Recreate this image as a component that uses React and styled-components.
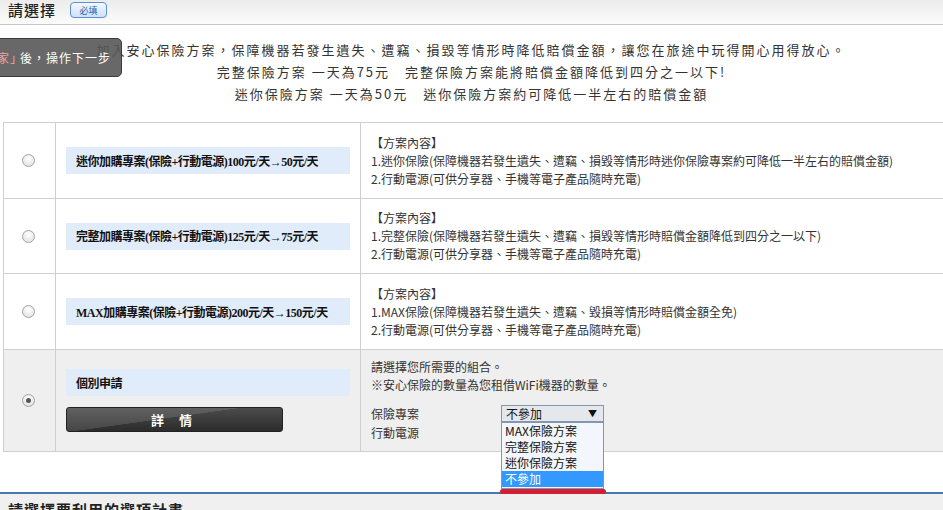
import React from 'react';
import styled, { createGlobalStyle } from 'styled-components';

const GlobalStyle = createGlobalStyle`
    html, body {
        margin: 0;
        padding: 0;
        overflow: hidden;
        background: #fff;
    }
    body {
        font-family: "Noto Sans CJK TC", "Noto Sans", sans-serif;
        color: #333;
    }
`

const Page = styled.div`
    position: relative;
    width: 943px;
    height: 510px;
    overflow: hidden;
`

const Header = styled.div`
    height: 25px;
    box-sizing: border-box;
    border-bottom: 1px solid #c6c6c6;
    background: linear-gradient(#ececec, #fbfbfb);
    display: flex;
    align-items: flex-start;
    padding: 0 0 0 8px;
    gap: 14px;
`

const Title = styled.h2`
    margin: 0;
    font-size: 15px;
    line-height: 19px;
    font-weight: 500;
    letter-spacing: 1px;
    color: #222;
`

const Badge = styled.span`
    display: inline-flex;
    align-items: center;
    justify-content: center;
    width: 37px;
    height: 16px;
    margin-top: 2px;
    box-sizing: border-box;
    border: 1px solid #5b8fd6;
    border-radius: 4px;
    background: linear-gradient(#f4f8ff, #cfe0f8);
    font-size: 9px;
    color: #2a5fb0;
`

const Intro = styled.div`
    text-align: center;
    font-size: 13px;
    letter-spacing: 2px;
    line-height: 22px;
    padding-top: 14px;
    color: #333;
`

const Hint = styled.div`
    position: absolute;
    left: -1px;
    top: 38px;
    width: 123px;
    height: 39px;
    box-sizing: border-box;
    border: 1px solid #3c3c3c;
    border-radius: 0 5px 5px 0;
    background: rgba(88, 88, 88, 0.9);
    color: #fff;
    font-size: 12px;
    letter-spacing: 1px;
    display: flex;
    align-items: center;
    white-space: nowrap;
    overflow: hidden;
    text-indent: -3px;
    span {
        color: #f1a2a6;
    }
`

const Table = styled.div`
    margin: 17px 0 0 3px;
    width: 960px;
    border-bottom: 1px solid #cfcfcf;
`

const Row = styled.div`
    display: grid;
    grid-template-columns: 52px 305px 1fr;
    box-sizing: border-box;
    min-height: ${p => p.h}px;
    border-top: 1px solid #cfcfcf;
    background: ${p => (p.gray ? '#efefef' : '#fff')};
`

const Cell = styled.div`
    border-left: 1px solid #cfcfcf;
    display: flex;
    flex-direction: column;
    justify-content: center;
`

const RadioCell = styled(Cell)`
    align-items: center;
`

const Radio = styled.span`
    width: 13px;
    height: 13px;
    box-sizing: border-box;
    border-radius: 50%;
    border: 1px solid #a3a3a3;
    background: radial-gradient(circle at 50% 35%, #ffffff, #dcdcdc);
    display: flex;
    align-items: center;
    justify-content: center;
    margin-left: -3px;
    &::after {
        content: '';
        width: 5px;
        height: 5px;
        border-radius: 50%;
        background: ${p => (p.checked ? '#555' : 'transparent')};
    }
`

const PlanCell = styled(Cell)`
    padding: 0 10px;
    gap: 11px;
`

const PlanName = styled.div`
    height: 27px;
    background: #e1ecfb;
    display: flex;
    align-items: center;
    padding-left: 10px;
    font-family: "Liberation Serif", "Noto Sans CJK TC", serif;
    font-size: 12px;
    font-weight: bold;
    letter-spacing: -0.5px;
    color: #111;
`

const DetailButton = styled.button`
    width: 217px;
    height: 25px;
    border: 1px solid #222;
    border-radius: 3px;
    background:
        linear-gradient(172deg, rgba(255,255,255,0.12) 0 45%, transparent 46%),
        linear-gradient(#4b4b4b, #2c2c2c);
    color: #fff;
    font-family: "Noto Sans CJK TC", sans-serif;
    font-size: 13px;
    font-weight: bold;
    letter-spacing: 6px;
    padding: 0;
    cursor: pointer;
`

const InfoCell = styled(Cell)`
    padding: ${p => (p.top ? '8px 10px 9px' : '0 10px')};
    justify-content: ${p => (p.top ? 'flex-start' : 'center')};
    font-size: 12px;
    line-height: 18px;
    color: #333;
`

const Line = styled.div`
    white-space: nowrap;
`

const FormRows = styled.div`
    margin-top: 10px;
    display: grid;
    grid-template-columns: 130px 103px;
    grid-auto-rows: 19px;
    align-items: center;
    font-size: 12px;
`

const SelectWrap = styled.div`
    position: relative;
    height: 17px;
`

const SelectBox = styled.div`
    height: 17px;
    box-sizing: border-box;
    border: 1px solid #8595ad;
    background: #e4e7ec;
    display: flex;
    align-items: center;
    justify-content: space-between;
    padding: 0 6px 0 4px;
    font-size: 12px;
    color: #111;
    i {
        font-style: normal;
        font-size: 9px;
    }
`

const OptionList = styled.ul`
    position: absolute;
    top: 17px;
    left: 0;
    width: 103px;
    margin: 0;
    padding: 0 0 1px;
    list-style: none;
    box-sizing: border-box;
    border: 1px solid #8397b3;
    background: #f3f6fb;
    z-index: 5;
    &::after {
        content: '';
        position: absolute;
        left: -2px;
        right: -3px;
        bottom: -6px;
        height: 5px;
        border-radius: 3px;
        background: #d21f33;
    }
`

const Option = styled.li`
    height: 16px;
    line-height: 16px;
    padding-left: 3px;
    font-size: 12px;
    white-space: nowrap;
    color: ${p => (p.selected ? '#fff' : '#111')};
    background: ${p => (p.selected ? '#3399ff' : 'transparent')};
`

const BottomBar = styled.div`
    margin-top: 40px;
    border-top: 2px solid #4878b0;
    background: #f0f0f0;
    height: 40px;
    padding: 5px 8px;
    font-size: 15px;
    font-weight: bold;
    letter-spacing: 1px;
    color: #222;
`

const plans = [
    {
        h: 76,
        name: '迷你加購專案(保險+行動電源)100元/天→50元/天',
        info: ['1.迷你保險(保障機器若發生遺失、遭竊、損毀等情形時迷你保險專案約可降低一半左右的賠償金額)'],
    },
    {
        h: 75,
        name: '完整加購專案(保險+行動電源)125元/天→75元/天',
        info: ['1.完整保險(保障機器若發生遺失、遭竊、損毀等情形時賠償金額降低到四分之一以下)'],
    },
    {
        h: 76,
        name: 'MAX加購專案(保險+行動電源)200元/天→150元/天',
        info: ['1.MAX保險(保障機器若發生遺失、遭竊、毀損等情形時賠償金額全免)'],
    },
]

const App = () => {
    return (
        <Page>
            <GlobalStyle />
            <Header>
                <Title>請選擇</Title>
                <Badge>必填</Badge>
            </Header>
            <Intro>
                <div>加入安心保險方案，保障機器若發生遺失、遭竊、損毀等情形時降低賠償金額，讓您在旅途中玩得開心用得放心。</div>
                <div>完整保險方案 一天為75元　完整保險方案能將賠償金額降低到四分之一以下!</div>
                <div>迷你保險方案 一天為50元　迷你保險方案約可降低一半左右的賠償金額</div>
            </Intro>
            <Hint><span>家」</span>後，操作下一步</Hint>

            <Table>
                {plans.map(p => (
                    <Row key={p.name} h={p.h}>
                        <RadioCell><Radio /></RadioCell>
                        <PlanCell>
                            <PlanName>{p.name}</PlanName>
                        </PlanCell>
                        <InfoCell>
                            <Line>【方案內容】</Line>
                            {p.info.map(t => <Line key={t}>{t}</Line>)}
                            <Line>2.行動電源(可供分享器、手機等電子產品隨時充電)</Line>
                        </InfoCell>
                    </Row>
                ))}
                <Row h={102} gray>
                    <RadioCell><Radio checked /></RadioCell>
                    <PlanCell>
                        <PlanName>個別申請</PlanName>
                        <DetailButton>詳 情</DetailButton>
                    </PlanCell>
                    <InfoCell top>
                        <Line>請選擇您所需要的組合。</Line>
                        <Line>※安心保險的數量為您租借WiFi機器的數量。</Line>
                        <FormRows>
                            <span>保險專案</span>
                            <SelectWrap>
                                <SelectBox>不參加<i>▼</i></SelectBox>
                                <OptionList>
                                    <Option>MAX保險方案</Option>
                                    <Option>完整保險方案</Option>
                                    <Option>迷你保險方案</Option>
                                    <Option selected>不參加</Option>
                                </OptionList>
                            </SelectWrap>
                            <span>行動電源</span>
                        </FormRows>
                    </InfoCell>
                </Row>
            </Table>

            <BottomBar>請選擇要利用的選項計畫</BottomBar>
        </Page>
    )
}

export default App;
